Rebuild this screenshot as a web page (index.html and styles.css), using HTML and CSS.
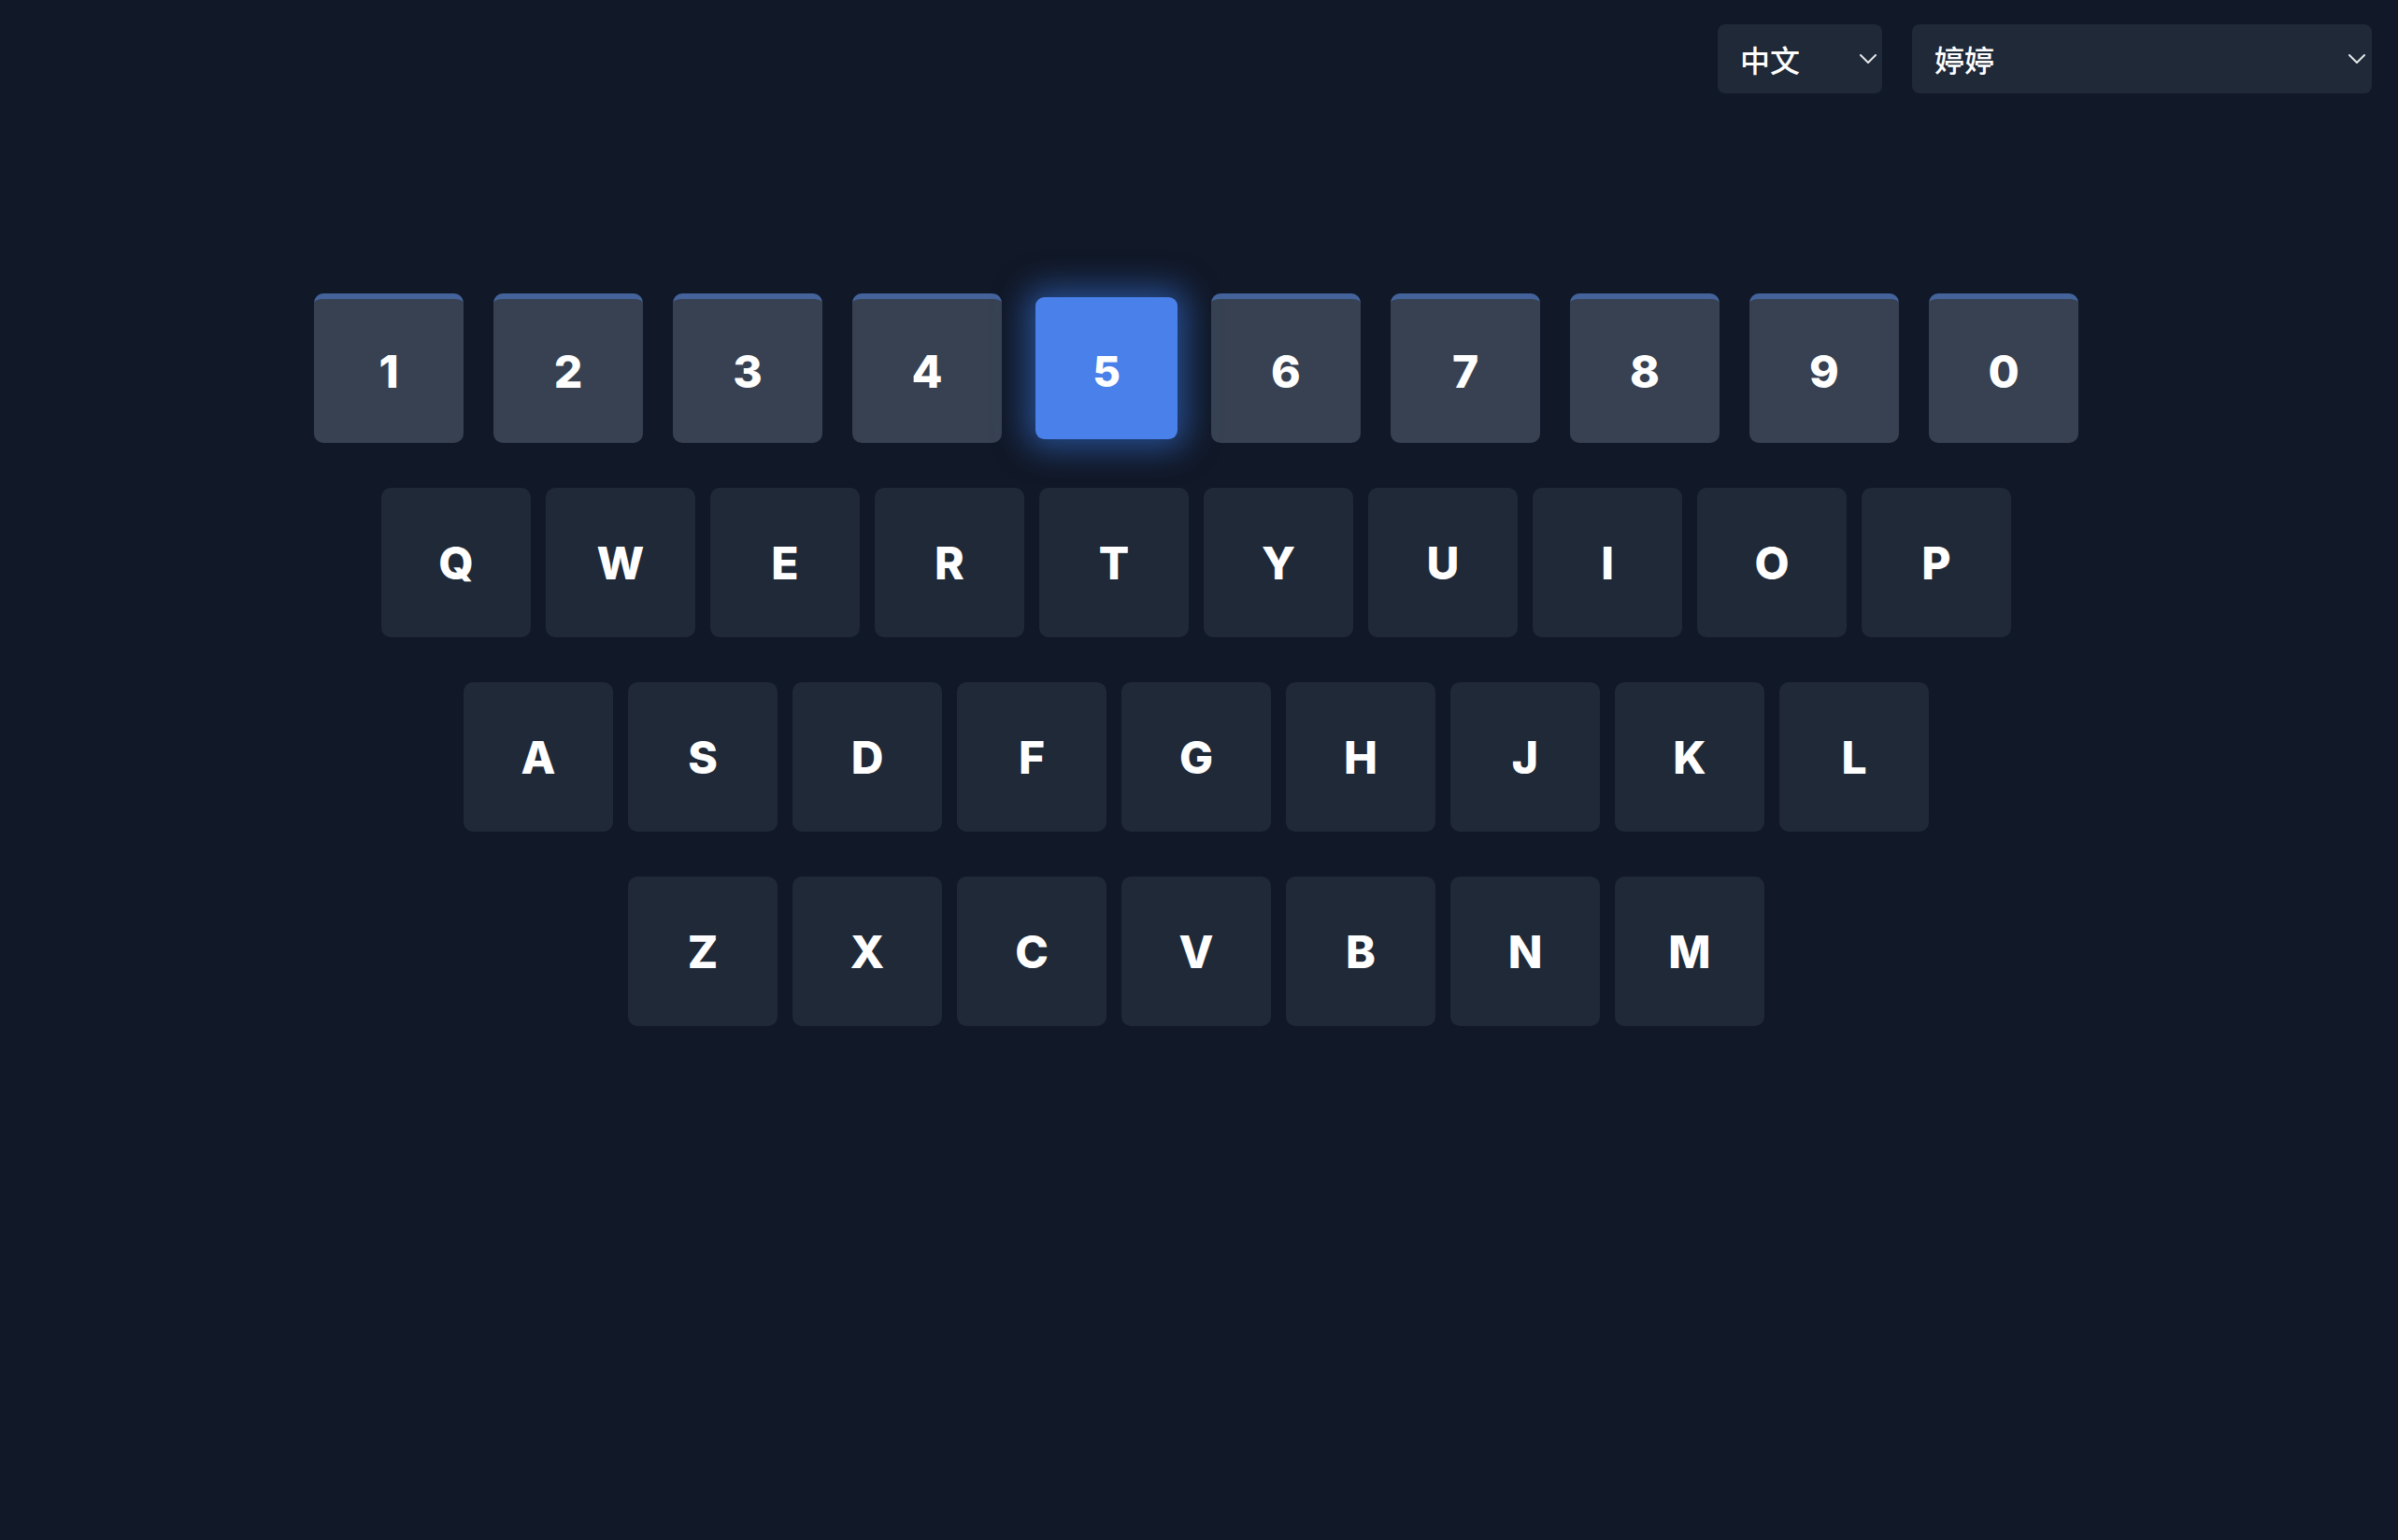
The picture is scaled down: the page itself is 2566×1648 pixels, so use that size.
FILE: index.html
```html
<!DOCTYPE html>
<html lang="zh">
<head>
<meta charset="utf-8">
<title>Keyboard</title>
<link rel="stylesheet" href="styles.css">
</head>
<body>
<header class="topbar">
  <div class="select select-lang">
    <span class="select-text">中文</span>
    <svg class="chevron" viewBox="0 0 18 10" width="18" height="10"><polyline points="1,1 9,9 17,1" fill="none" stroke="#e5e7eb" stroke-width="2" stroke-linecap="round" stroke-linejoin="round"/></svg>
  </div>
  <div class="select select-user">
    <span class="select-text">婷婷</span>
    <svg class="chevron" viewBox="0 0 18 10" width="18" height="10"><polyline points="1,1 9,9 17,1" fill="none" stroke="#e5e7eb" stroke-width="2" stroke-linecap="round" stroke-linejoin="round"/></svg>
  </div>
</header>
<main class="keyboard">
  <div class="row row-num">
    <div class="key key-num">1</div>
    <div class="key key-num">2</div>
    <div class="key key-num">3</div>
    <div class="key key-num">4</div>
    <div class="key key-num key-active">5</div>
    <div class="key key-num">6</div>
    <div class="key key-num">7</div>
    <div class="key key-num">8</div>
    <div class="key key-num">9</div>
    <div class="key key-num">0</div>
  </div>
  <div class="row">
    <div class="key">Q</div>
    <div class="key">W</div>
    <div class="key">E</div>
    <div class="key">R</div>
    <div class="key">T</div>
    <div class="key">Y</div>
    <div class="key">U</div>
    <div class="key">I</div>
    <div class="key">O</div>
    <div class="key">P</div>
  </div>
  <div class="row">
    <div class="key">A</div>
    <div class="key">S</div>
    <div class="key">D</div>
    <div class="key">F</div>
    <div class="key">G</div>
    <div class="key">H</div>
    <div class="key">J</div>
    <div class="key">K</div>
    <div class="key">L</div>
  </div>
  <div class="row">
    <div class="key">Z</div>
    <div class="key">X</div>
    <div class="key">C</div>
    <div class="key">V</div>
    <div class="key">B</div>
    <div class="key">N</div>
    <div class="key">M</div>
  </div>
</main>
</body>
</html>
```

FILE: styles.css
```css
html, body {
  margin: 0;
  padding: 0;
  background: #111827;
  min-height: 100%;
}
body {
  font-family: Inter, "Noto Sans CJK SC", sans-serif;
  color: #ffffff;
  height: 1648px;
  overflow: hidden;
}
.topbar {
  display: flex;
  justify-content: flex-end;
  gap: 32px;
  padding: 26px 28px 0 0;
}
.select {
  height: 74px;
  box-sizing: border-box;
  background: #1f2937;
  border-radius: 8px;
  display: flex;
  align-items: center;
  justify-content: space-between;
  font-family: "Noto Sans CJK SC", sans-serif;
  font-size: 32px;
  font-weight: 500;
  color: #ffffff;
}
.select-lang {
  width: 176px;
  padding: 0 6px 0 24px;
}
.select-user {
  width: 492px;
  padding: 0 7px 0 24px;
}
.select-text {
  line-height: 1;
}
.chevron {
  display: block;
}
.keyboard {
  display: flex;
  flex-direction: column;
  align-items: center;
  gap: 48px;
  margin-top: 214px;
  padding-right: 6px;
}
.row {
  display: flex;
  gap: 16px;
}
.row-num {
  gap: 32px;
}
.key {
  width: 160px;
  height: 160px;
  box-sizing: border-box;
  border-radius: 10px;
  background: #1f2937;
  display: flex;
  align-items: center;
  justify-content: center;
  font-family: Inter, "Liberation Sans", sans-serif;
  font-weight: 800;
  font-size: 48px;
  color: #ffffff;
}
.key-num {
  background: #374151;
  border-top: 6px solid #44639a;
}
.key-active {
  background: #4a80e9;
  border-top-color: #4a80e9;
  transform: scale(0.95);
  box-shadow: 0 0 36px 10px rgba(59, 130, 246, 0.5);
  position: relative;
}
```
